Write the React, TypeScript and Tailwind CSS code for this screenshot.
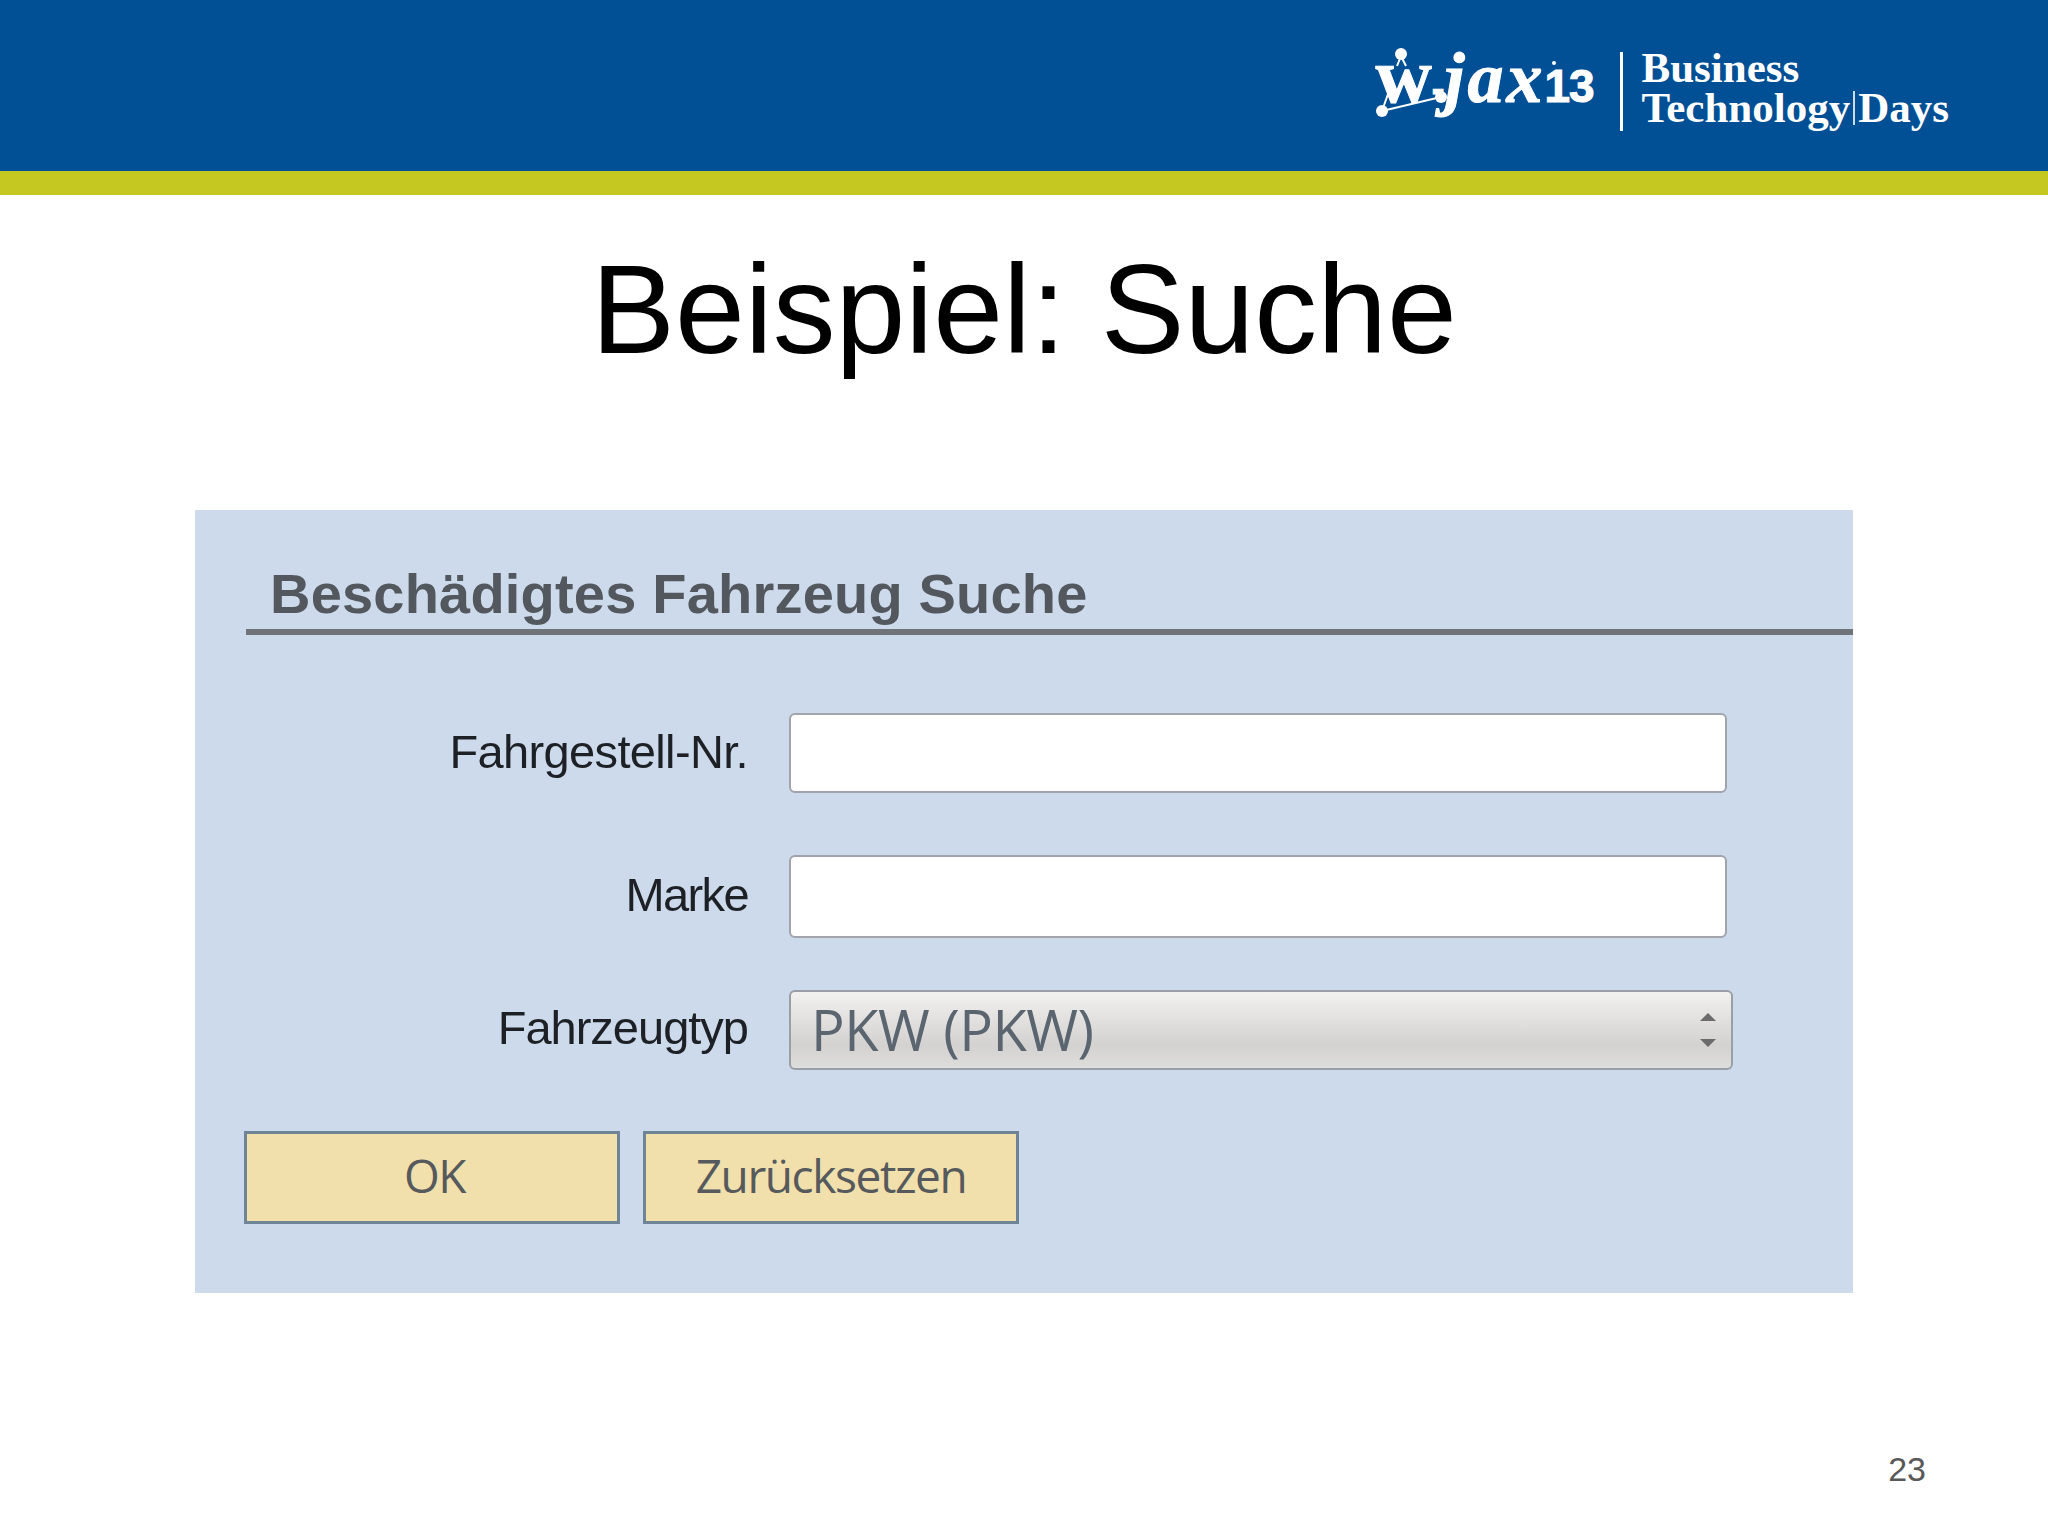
function Logo() {
  return (
    <div className="mr-[99px] flex items-center">
      <div className="relative h-[80px] w-[224px] text-white">
        <div className="mt-[-15px] flex items-baseline whitespace-nowrap [-webkit-text-stroke:1px_white]">
          <span className="font-['Liberation_Serif',serif] text-[78px] font-bold leading-none">w</span>
          <span className="font-['Liberation_Sans',sans-serif] text-[38px] font-bold leading-none">-</span>
          <span className="font-['Liberation_Serif',serif] text-[72px] font-bold italic leading-none tracking-[3px]">jax</span>
          <span className="ml-[-1px] font-['Liberation_Sans',sans-serif] text-[46px] font-bold leading-none tracking-[-1px]">13</span>
        </div>
        <svg className="absolute left-[-6px] top-[-10px]" width="200" height="90" viewBox="0 0 200 90" fill="none">
          <circle cx="31" cy="12" r="6" fill="#fff" />
          <path d="M31 14l-4 10M31 14l5 10" stroke="#fff" strokeWidth="2" />
          <circle cx="12" cy="69" r="6" fill="#fff" />
          <circle cx="71" cy="55" r="6" fill="#fff" />
          <path d="M12 69L71 55M12 69l6-17" stroke="#fff" strokeWidth="2" />
          <circle cx="184" cy="21" r="2" fill="#fff" />
        </svg>
      </div>
      <div className="ml-[20px] h-[79px] w-[3px] bg-white" />
      <div className="ml-[19px] mt-[-8px] font-['Liberation_Serif',serif] text-[43px] font-bold leading-[40px] text-white">
        <div>Business</div>
        <div className="flex items-center">
          Technology
          <span className="mx-[3px] h-[34px] w-[2px] bg-white/80" />
          Days
        </div>
      </div>
    </div>
  );
}

function Field({ label, className, tracking }: { label: string; className: string; tracking: string }) {
  return (
    <div className={`flex items-center ${className}`}>
      <label className={`w-[553px] pb-[4px] text-right font-['Liberation_Sans',sans-serif] text-[47px] leading-none text-[#1d2126] blur-[0.4px] ${tracking}`}>
        {label}
      </label>
      <div className="ml-[41px] h-full w-[938px] rounded-[6px] border-2 border-[#a1a4ab] bg-white" />
    </div>
  );
}

export default function App() {
  return (
    <div className="flex h-[1536px] w-[2048px] flex-col overflow-hidden bg-white">
      <header className="flex h-[171px] items-center justify-end bg-[#015095] pt-[12px]">
        <Logo />
      </header>
      <div className="h-[24px] bg-[#c6c822]" />

      <h1 className="mt-[45px] text-center font-['Liberation_Sans',sans-serif] text-[125.6px] leading-[140px] text-black">
        Beispiel: Suche
      </h1>

      <section className="ml-[195px] mt-[130px] h-[783px] w-[1658px] bg-[#cddaeb]">
        <div className="ml-[51px] flex h-[125px] items-end border-b-[6px] border-[#6f7478] pl-[24px]">
          <h2 className="font-['Liberation_Sans',sans-serif] text-[56px] font-bold leading-[70px] tracking-[0.2px] text-[#53585e] blur-[0.4px]">
            Beschädigtes Fahrzeug Suche
          </h2>
        </div>

        <Field label="Fahrgestell-Nr." className="mt-[78px] h-[80px]" tracking="tracking-[-0.65px]" />
        <Field label="Marke" className="mt-[62px] h-[83px]" tracking="tracking-[-1.6px]" />

        <div className="mt-[52px] flex h-[80px] items-center">
          <label className="w-[553px] pb-[5px] text-right font-['Liberation_Sans',sans-serif] text-[47px] leading-none tracking-[-1px] text-[#1d2126] blur-[0.4px]">
            Fahrzeugtyp
          </label>
          <div className="ml-[41px] flex h-full w-[944px] items-center justify-between rounded-[6px] border-2 border-[#9a9ea6] bg-gradient-to-b from-[#f3f1ef] via-[#d4d2d0] via-70% to-[#dddddb] pl-[20px] pr-[14px]">
            <span className="pb-[2px] font-['Open_Sans',sans-serif] text-[56px] leading-none tracking-[-0.5px] text-[#5a6570] blur-[0.4px]">PKW (PKW)</span>
            <svg width="18" height="36" viewBox="0 0 18 36" fill="#6b6b6b">
              <path d="M9 1l8 8H1z" />
              <path d="M9 35l8-8H1z" />
            </svg>
          </div>
        </div>

        <div className="ml-[49px] mt-[61px] flex gap-[23px]">
          <button className="h-[93px] w-[376px] border-[3px] border-[#6f8597] bg-[#f1e0ac] pb-[4px] pl-[5px] font-['Open_Sans',sans-serif] text-[46px] tracking-[-1.4px] text-[#565a5c]">
            OK
          </button>
          <button className="h-[93px] w-[376px] border-[3px] border-[#6f8597] bg-[#f1e0ac] pb-[4px] font-['Open_Sans',sans-serif] text-[46px] tracking-[-1.4px] text-[#565a5c]">
            Zurücksetzen
          </button>
        </div>
      </section>

      <footer className="mr-[122px] mt-[156px] text-right font-['Liberation_Sans',sans-serif] text-[34px] leading-[40px] text-[#595959]">
        23
      </footer>
    </div>
  );
}
